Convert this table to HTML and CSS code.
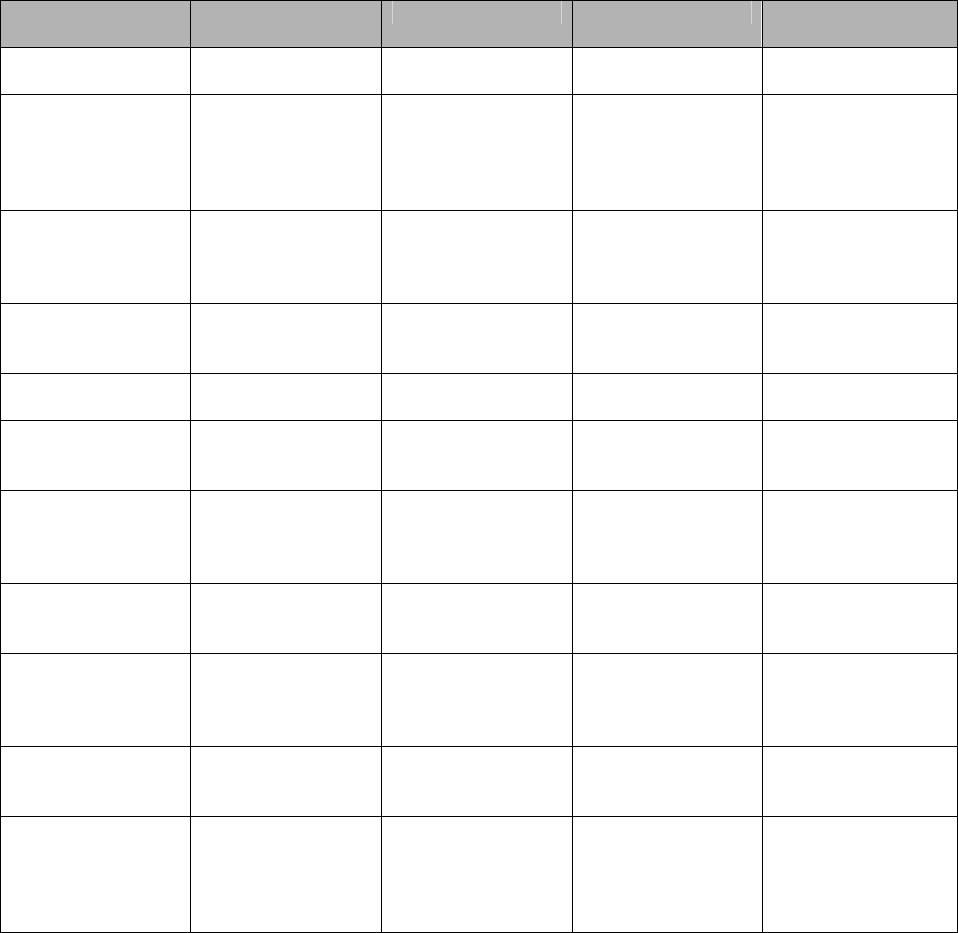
FILE: index.html
```html
<!DOCTYPE html>
<html lang="en">
<head>
<meta charset="utf-8">
<title>Table</title>
<link rel="stylesheet" href="styles.css">
</head>
<body>
<div class="grid">
  <div class="cell head"></div>
  <div class="cell head"></div>
  <div class="cell head head-3"></div>
  <div class="cell head head-4"></div>
  <div class="cell head"></div>

  <div class="cell"></div><div class="cell"></div><div class="cell"></div><div class="cell"></div><div class="cell"></div>
  <div class="cell"></div><div class="cell"></div><div class="cell"></div><div class="cell"></div><div class="cell"></div>
  <div class="cell"></div><div class="cell"></div><div class="cell"></div><div class="cell"></div><div class="cell"></div>
  <div class="cell"></div><div class="cell"></div><div class="cell"></div><div class="cell"></div><div class="cell"></div>
  <div class="cell"></div><div class="cell"></div><div class="cell"></div><div class="cell"></div><div class="cell"></div>
  <div class="cell"></div><div class="cell"></div><div class="cell"></div><div class="cell"></div><div class="cell"></div>
  <div class="cell"></div><div class="cell"></div><div class="cell"></div><div class="cell"></div><div class="cell"></div>
  <div class="cell"></div><div class="cell"></div><div class="cell"></div><div class="cell"></div><div class="cell"></div>
  <div class="cell"></div><div class="cell"></div><div class="cell"></div><div class="cell"></div><div class="cell"></div>
  <div class="cell"></div><div class="cell"></div><div class="cell"></div><div class="cell"></div><div class="cell"></div>
  <div class="cell"></div><div class="cell"></div><div class="cell"></div><div class="cell"></div><div class="cell"></div>
</div>
</body>
</html>
```

FILE: styles.css
```css
html, body {
  margin: 0;
  padding: 0;
  background: #ffffff;
  font-family: "Liberation Sans", Arial, sans-serif;
}

.grid {
  display: grid;
  width: 958px;
  box-sizing: border-box;
  padding: 1px;
  gap: 1px;
  background: #000000;
  grid-template-columns: 189px 190px 190px 189px 194px;
  grid-template-rows: 46px 46px 115px 92px 69px 46px 69px 92px 69px 92px 69px 115px;
}

.cell {
  background: #ffffff;
  position: relative;
}

.head {
  background: #b3b3b3;
}

.head-3::before,
.head-3::after,
.head-4::before {
  content: "";
  position: absolute;
  top: 0;
  width: 1px;
  height: 23px;
  background: #d6d6d6;
}

.head-3::before { left: 10px; }
.head-3::after { left: 179px; }
.head-4::before { left: 178px; }

.head-4::after {
  content: "";
  position: absolute;
  top: 0;
  right: 0;
  width: 1px;
  height: 100%;
  background: #f2f2f2;
}
```
